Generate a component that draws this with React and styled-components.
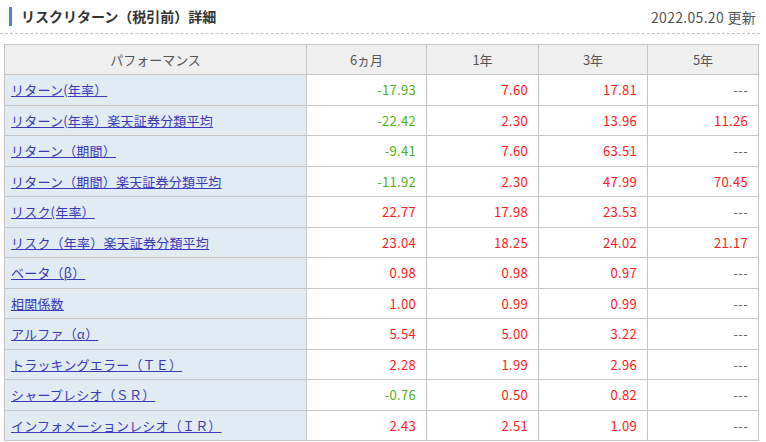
import React from "react";
import styled, { createGlobalStyle } from "styled-components";

const GlobalStyle = createGlobalStyle`
  body {
    margin: 0;
    background: #ffffff;
    font-family: "Noto Sans CJK JP", "Noto Sans", sans-serif;
    color: #333333;
  }
`;

const rows = [
  ["リターン(年率）", "-17.93", "7.60", "17.81", "---"],
  ["リターン(年率）楽天証券分類平均", "-22.42", "2.30", "13.96", "11.26"],
  ["リターン（期間）", "-9.41", "7.60", "63.51", "---"],
  ["リターン（期間）楽天証券分類平均", "-11.92", "2.30", "47.99", "70.45"],
  ["リスク(年率）", "22.77", "17.98", "23.53", "---"],
  ["リスク（年率）楽天証券分類平均", "23.04", "18.25", "24.02", "21.17"],
  ["ベータ（β）", "0.98", "0.98", "0.97", "---"],
  ["相関係数", "1.00", "0.99", "0.99", "---"],
  ["アルファ（α）", "5.54", "5.00", "3.22", "---"],
  ["トラッキングエラー（ＴＥ）", "2.28", "1.99", "2.96", "---"],
  ["シャープレシオ（ＳＲ）", "-0.76", "0.50", "0.82", "---"],
  ["インフォメーションレシオ（ＩＲ）", "2.43", "2.51", "1.09", "---"],
];

const Wrap = styled.div`
  width: 766px;
  height: 442px;
  overflow: hidden;
`;

const Heading = styled.div`
  display: flex;
  align-items: center;
  justify-content: space-between;
  height: 34px;
  margin: 0 6px 0 0;
  border-bottom: 1px dashed #c4c4c4;
  box-sizing: border-box;
  padding: 0 4px 0 9px;
`;

const Title = styled.h2`
  margin: 0;
  font-size: 14px;
  font-weight: bold;
  color: #333;
  border-left: 3px solid #4a86c0;
  padding-left: 9px;
  line-height: 19px;
`;

const Updated = styled.span`
  font-size: 14px;
  letter-spacing: 0.3px;
  color: #555;
`;

const Table = styled.table`
  margin: 10px 0 0 4px;
  border-collapse: collapse;
  table-layout: fixed;
  width: 755px;
  font-size: 13px;
`;

const Th = styled.th`
  background: #efefef;
  border: 1px solid #c6c6c6;
  font-weight: normal;
  color: #555;
  height: 29px;
  padding: 0;
  text-align: center;
`;

const Label = styled.td`
  background: #e1ebf3;
  border: 1px solid #c6c6c6;
  height: 29.5px;
  padding: 0 0 0 6px;
`;

const Link = styled.a`
  color: #3a3ab8;
  text-decoration: underline;
  letter-spacing: 0.2px;
  cursor: pointer;
`;

const Num = styled.td`
  border: 1px solid #c6c6c6;
  text-align: right;
  padding: 0 10px 0 0;
  letter-spacing: 0.3px;
  color: ${(p) => p.$tone};
`;

const toneOf = (v) => {
  if (v === "---") return "#666666";
  return v.startsWith("-") ? "#4db320" : "#ff1a1a";
};

export default function App() {
  return (
    <Wrap>
      <GlobalStyle />
      <Heading>
        <Title>リスクリターン（税引前）詳細</Title>
        <Updated>2022.05.20 更新</Updated>
      </Heading>
      <Table>
        <colgroup>
          <col style={{ width: 302 }} />
          <col style={{ width: 120 }} />
          <col style={{ width: 112 }} />
          <col style={{ width: 109 }} />
          <col style={{ width: 111 }} />
        </colgroup>
        <thead>
          <tr>
            <Th>パフォーマンス</Th>
            <Th>6ヵ月</Th>
            <Th>1年</Th>
            <Th>3年</Th>
            <Th>5年</Th>
          </tr>
        </thead>
        <tbody>
          {rows.map((r) => (
            <tr key={r[0]}>
              <Label>
                <Link>{r[0]}</Link>
              </Label>
              {r.slice(1).map((v, i) => (
                <Num key={i} $tone={toneOf(v)}>
                  {v}
                </Num>
              ))}
            </tr>
          ))}
        </tbody>
      </Table>
    </Wrap>
  );
}
